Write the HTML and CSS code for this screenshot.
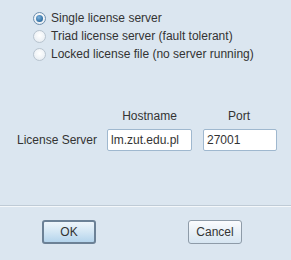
FILE: index.html
```html
<!DOCTYPE html>
<html lang="en">
<head>
    <meta charset="UTF-8">
    <title>License Server</title>
    <link rel="stylesheet" href="styles.css">
</head>
<body>
    <div class="dialog">
        <div class="mode-list">
            <label class="radio-row">
                <span class="radio checked"></span>
                <span>Single license server</span>
            </label>
            <label class="radio-row">
                <span class="radio"></span>
                <span>Triad license server (fault tolerant)</span>
            </label>
            <label class="radio-row">
                <span class="radio"></span>
                <span>Locked license file (no server running)</span>
            </label>
        </div>

        <div class="server-grid">
            <div></div>
            <div class="col-head">Hostname</div>
            <div class="col-head">Port</div>
            <div class="row-label">License Server</div>
            <input class="field host" type="text" value="lm.zut.edu.pl">
            <input class="field port" type="text" value="27001">
        </div>

        <div class="separator"></div>

        <div class="buttons">
            <button class="btn default">OK</button>
            <button class="btn">Cancel</button>
        </div>
    </div>
</body>
</html>
```

FILE: styles.css
```css
* {
    margin: 0;
    padding: 0;
    box-sizing: border-box;
}

body {
    font-family: "Liberation Sans", Arial, sans-serif;
    font-size: 12px;
    color: #333;
    background: #dbe6f0;
    width: 291px;
    height: 260px;
    overflow: hidden;
}

.dialog {
    display: flex;
    flex-direction: column;
    height: 260px;
}

.mode-list {
    display: flex;
    flex-direction: column;
    padding: 9px 0 0 33px;
}

.radio-row {
    display: flex;
    align-items: center;
    height: 18px;
    gap: 5px;
}

.radio {
    width: 13px;
    height: 13px;
    border-radius: 50%;
    border: 1px solid #b8c4cf;
    background: radial-gradient(circle at 50% 40%, #ffffff 0%, #eef2f6 60%, #dde4eb 100%);
    position: relative;
}

.radio.checked {
    border-color: #6d8fae;
}

.radio.checked::after {
    content: "";
    position: absolute;
    left: 2px;
    top: 2px;
    width: 7px;
    height: 7px;
    border-radius: 50%;
    background: radial-gradient(circle at 40% 35%, #7fb2dc 0%, #2f6fa3 70%, #24598a 100%);
}

.server-grid {
    display: grid;
    grid-template-columns: 97px 85px 74px;
    column-gap: 10px;
    row-gap: 5px;
    margin: 45px 0 0 0;
    align-items: center;
}

.col-head {
    text-align: center;
    height: 16px;
    line-height: 16px;
}

.row-label {
    text-align: right;
}

.field {
    height: 22px;
    border: 1px solid #9fb8cf;
    border-radius: 2px;
    background: #fff;
    font-family: inherit;
    font-size: 12px;
    color: #333;
    padding: 0 3px;
    outline: none;
}

.field.port {
    margin-left: 1px;
    width: 74px;
}

.separator {
    margin-top: 54px;
    height: 2px;
    border-top: 1px solid #bfcbd6;
    border-bottom: 1px solid #f4f8fb;
}

.buttons {
    display: flex;
    padding: 13px 0 0 42px;
    gap: 92px;
}

.btn {
    width: 54px;
    height: 24px;
    font-family: inherit;
    font-size: 12px;
    color: #333;
    border: 1px solid #8e9ba8;
    border-radius: 3px;
    background: linear-gradient(#fbfcfe, #e8f0f7 50%, #d6e5f1);
}

.btn.default {
    border: 2px solid #6c8196;
    background: linear-gradient(#eef5fb, #d3e6f4 50%, #b4d4ec);
}
```
